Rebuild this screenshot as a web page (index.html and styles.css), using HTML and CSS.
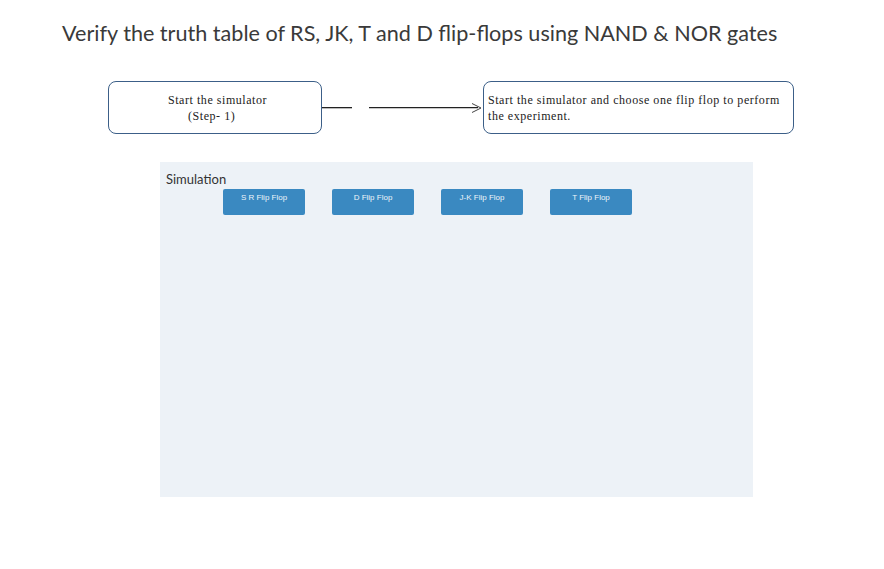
FILE: index.html
```html
<!DOCTYPE html>
<html lang="en">
<head>
  <meta charset="UTF-8" />
  <title>Flip-flops - Simulation</title>
  <link rel="stylesheet" href="styles.css">
</head>
<body>

<h1 class="title">Verify the truth table of RS, JK, T and D flip-flops using NAND &amp; NOR gates</h1>

<div class="flow">
  <div class="step-box step-first">
    <div>Start the simulator</div>
    <div class="step-num">(Step- 1)</div>
  </div>
  <svg class="connector" width="161" height="53" viewBox="0 0 161 53">
    <line x1="0" y1="26.5" x2="30" y2="26.5" stroke="#222" stroke-width="1"/>
    <line x1="0" y1="27.5" x2="30" y2="27.5" stroke="#bbb" stroke-width="1"/>
    <line x1="47" y1="26.5" x2="156" y2="26.5" stroke="#222" stroke-width="1"/>
    <line x1="47" y1="27.5" x2="156" y2="27.5" stroke="#c8c8c8" stroke-width="1"/>
    <polyline points="150,22.5 159,27 150,31.5" fill="none" stroke="#444" stroke-width="1"/>
  </svg>
  <div class="step-box step-second">
    Start the simulator and choose one flip flop to perform the experiment.
  </div>
</div>

<div class="panel">
  <div class="panel-title">Simulation</div>
  <div class="btn-row">
    <button class="ff-btn">S R Flip Flop</button>
    <button class="ff-btn">D Flip Flop</button>
    <button class="ff-btn">J-K Flip Flop</button>
    <button class="ff-btn">T Flip Flop</button>
  </div>
</div>

</body>
</html>
```

FILE: styles.css
```css
body {
  margin: 0;
  background-color: white;
  font-family: Lato, "Open Sans", sans-serif;
  color: #333;
}
.title {
  margin: 0;
  padding: 20px 0 0 62px;
  font-size: 21.6px;
  font-weight: normal;
  line-height: 26px;
  color: #3a3a3a;
}
.flow {
  display: flex;
  margin: 35px 0 0 108px;
}
.step-box {
  box-sizing: border-box;
  height: 53px;
  border: 1px solid #3c5f88;
  border-radius: 8px;
  font-family: "Liberation Serif", serif;
  font-size: 12px;
  letter-spacing: 0.55px;
  line-height: 16px;
  color: #222;
}
.step-first {
  width: 214px;
  padding: 10px 0 0 59px;
}
.step-num { padding-left: 20px; }
.step-second {
  width: 311px;
  padding: 10px 8px 0 4px;
}
.connector { display: block; }
.panel {
  box-sizing: border-box;
  width: 593px;
  height: 335px;
  margin: 28px 0 0 160px;
  padding: 9px 6px;
  background-color: #edf2f7;
}
.panel-title {
  font-size: 13px;
  line-height: 16px;
  color: #333;
}
.btn-row {
  display: flex;
  gap: 27px;
  padding-left: 57px;
  margin-top: 2px;
  align-items: flex-start;
}
.ff-btn {
  width: 82px;
  padding: 4px 0 12px;
  border: none;
  border-radius: 2px;
  background-color: #3a89c1;
  color: #eef4fa;
  font-family: "Liberation Sans", Arial, sans-serif;
  font-size: 8px;
  line-height: 10px;
  text-align: center;
}
```
